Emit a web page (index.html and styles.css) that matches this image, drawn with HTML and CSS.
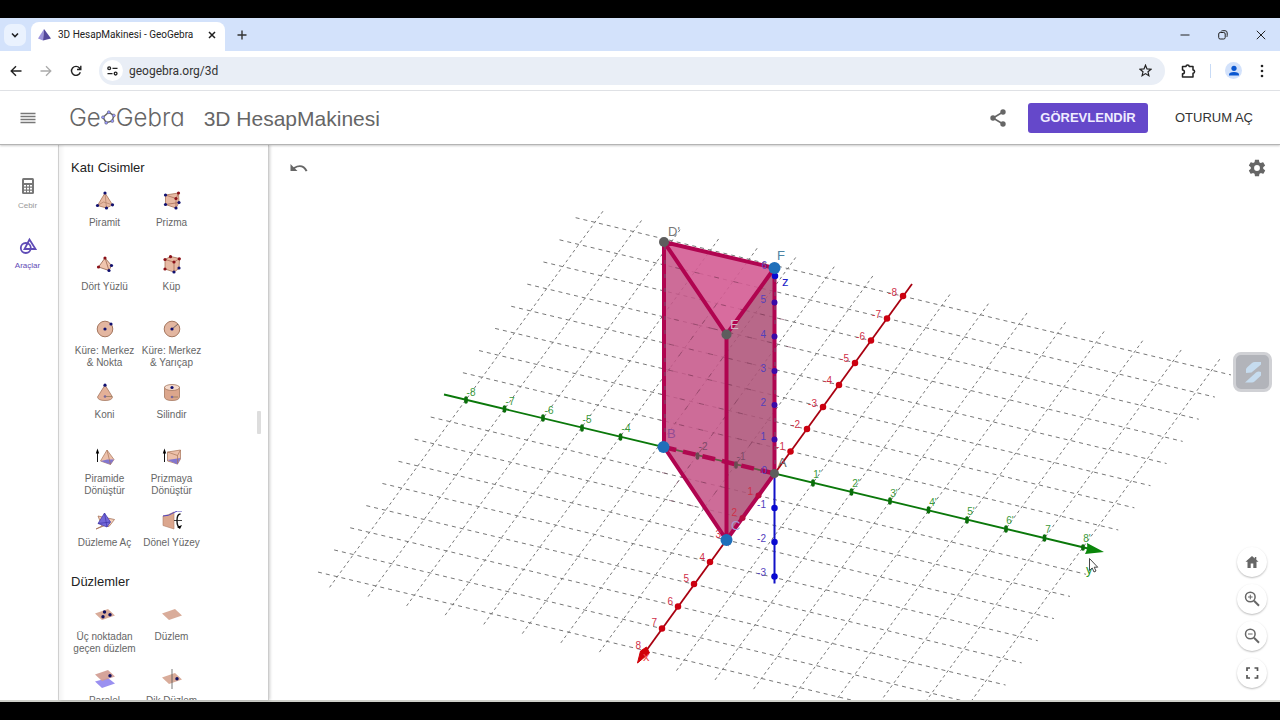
FILE: index.html
```html
<!DOCTYPE html>
<html lang="tr">
<head>
<meta charset="utf-8">
<title>3D HesapMakinesi - GeoGebra</title>
<link rel="stylesheet" href="styles.css">
</head>
<body>
<div class="window">
  <div class="tabstrip">
    <button class="tab-search" aria-label="Sekme ara"><svg width="10" height="10" viewBox="0 0 10 10"><path d="M2 3.5l3 3 3-3" fill="none" stroke="#202124" stroke-width="1.6"/></svg></button>
    <div class="tab">
      <svg width="13" height="12" viewBox="0 0 13 12"><path d="M6 0L0 9.500l5 2z" fill="#9d94dc"/><path d="M6 0L5 11.500l8-2z" fill="#55489c"/></svg>
      <span class="tab-title">3D HesapMakinesi - GeoGebra</span>
      <button class="plain" aria-label="Sekmeyi kapat"><svg width="8" height="8" viewBox="0 0 8 8"><path d="M1 1l6 6M7 1L1 7" stroke="#1f1f1f" stroke-width="1.5"/></svg></button>
    </div>
    <button class="plain new-tab" aria-label="Yeni sekme"><svg width="10" height="10" viewBox="0 0 10 10"><path d="M5 .5v9M.5 5h9" stroke="#333" stroke-width="1.4"/></svg></button>
    <div class="window-controls">
      <button class="plain" aria-label="Küçült"><svg width="10" height="10" viewBox="0 0 10 10"><path d="M.5 5h9" stroke="#222"/></svg></button>
      <button class="plain" aria-label="Önceki boyut"><svg width="10" height="10" viewBox="0 0 10 10"><rect x=".7" y="2.500" width="6.500" height="6.500" rx="1.500" fill="none" stroke="#222"/><path d="M3 1.500Q3.300.7 4.500.7H7Q9.200.7 9.200 3V5.500Q9.200 6.700 8.500 7" fill="none" stroke="#222"/></svg></button>
      <button class="plain" aria-label="Kapat"><svg width="10" height="10" viewBox="0 0 10 10"><path d="M.8.8l8.400 8.400M9.200.8L.8 9.200" stroke="#222"/></svg></button>
    </div>
  </div>

  <div class="toolbar">
    <button class="plain" aria-label="Geri"><svg width="12" height="12" viewBox="0 0 12 12"><path d="M11.500 6H1.500M6 1.200L1.200 6 6 10.800" fill="none" stroke="#222" stroke-width="1.4"/></svg></button>
    <button class="plain" aria-label="İleri"><svg width="12" height="12" viewBox="0 0 12 12"><path d="M.5 6h10M6 1.200L10.800 6 6 10.800" fill="none" stroke="#aaa" stroke-width="1.3"/></svg></button>
    <button class="plain" aria-label="Yenile"><svg width="12" height="12" viewBox="0 0 12 12"><path d="M10.300 7.200A4.500 4.500 0 1 1 9.500 3L10.600 4.200M10.800.7V4.500H7" fill="none" stroke="#222" stroke-width="1.4"/></svg></button>
    <div class="address">
      <button class="site-info" aria-label="Site bilgileri"><svg width="11" height="10" viewBox="0 0 11 10"><g fill="none" stroke="#222" stroke-width="1.3"><circle cx="2.200" cy="2.300" r="1.400"/><circle cx="8.600" cy="7.600" r="1.400"/><path d="M5.500 2.300H10.500M.5 7.600H5.500"/></g></svg></button>
      <input class="url" type="text" value="geogebra.org/3d" aria-label="Adres çubuğu">
      <button class="plain" aria-label="Yer işareti"><svg width="13" height="13" viewBox="0 0 13 13"><path d="M6.500 1.200L8 4.900l4 .3-3 2.600.9 3.900-3.400-2.100-3.400 2.100L4 7.800 1 5.200l4-.3z" fill="none" stroke="#222" stroke-width="1.200"/></svg></button>
    </div>
    <button class="plain ext" aria-label="Uzantılar"><svg width="15" height="14" viewBox="0 0 15 14"><path d="M1.500 2.500H5A1.600 1.600 0 0 1 8.200 2.500H12V6A1.600 1.600 0 0 1 12 9.200V13H1.500V9.800A1.900 1.900 0 0 0 1.500 6z" fill="none" stroke="#222" stroke-width="1.500" stroke-linejoin="round"/></svg></button>
    <span class="divider"></span>
    <button class="profile" aria-label="Profil"><svg width="12" height="12" viewBox="0 0 12 12" fill="#0b57d0"><circle cx="6" cy="3.300" r="2.600"/><path d="M1 10.500V9.500Q1 7 6 7t5 2.500v1z"/></svg></button>
    <button class="plain" aria-label="Menü"><svg width="4" height="14" viewBox="0 0 4 14" fill="#222"><circle cx="2" cy="2" r="1.300"/><circle cx="2" cy="7" r="1.300"/><circle cx="2" cy="12" r="1.300"/></svg></button>
  </div>

  <header class="app-header">
    <button class="plain menu" aria-label="Menü"><svg width="16" height="12" viewBox="0 0 16 12"><path d="M.5 1.500h15M.5 4.500h15M.5 7.500h15M.5 10.500h15" stroke="#777" stroke-width="1.400"/></svg></button>
    <a class="logo" href="#" aria-label="GeoGebra"><span>Ge</span><svg width="15" height="15" viewBox="0 0 15 15"><path d="M7.800 2.200L12.800 5.500 11.300 11 5.200 12.700 2 7.300z" fill="none" stroke="#666" stroke-width="1.500"/><g fill="#9999ff" stroke="#555" stroke-width=".5"><circle cx="7.800" cy="2.200" r="1.500"/><circle cx="12.800" cy="5.500" r="1.500"/><circle cx="11.300" cy="11" r="1.500"/><circle cx="5.200" cy="12.700" r="1.500"/><circle cx="2" cy="7.300" r="1.500"/></g></svg><span>Gebra</span></a>
    <h1 class="app-title">3D HesapMakinesi</h1>
    <button class="plain share" aria-label="Paylaş"><svg width="16" height="18" viewBox="0 0 16 18"><path d="M13 3L3 9l10 6" fill="none" stroke="#666" stroke-width="1.600"/><g fill="#666"><circle cx="13" cy="3" r="2.700"/><circle cx="3" cy="9" r="2.700"/><circle cx="13" cy="15" r="2.700"/></g></svg></button>
    <button class="assign">GÖREVLENDİR</button>
    <button class="signin">OTURUM AÇ</button>
  </header>

  <main class="workspace">
    <nav class="rail">
      <button class="rail-item"><svg width="14" height="18" viewBox="0 0 14 18"><rect x="1" y="1" width="12" height="16" rx="1.500" fill="#777"/><path d="M3 3h8v3H3z" fill="#fff"/><path d="M3 8.700h8M3 11.600h8M3 14.500h8" stroke="#fff" stroke-width="1.600" stroke-dasharray="2 1"/></svg><span>Cebir</span></button>
      <button class="rail-item active"><svg width="18" height="18" viewBox="0 0 18 18"><g fill="none" stroke="#5f4bb6" stroke-width="1.800"><circle cx="6.800" cy="11" r="5"/><path d="M10.500 2.500L5.500 12h11z"/></g></svg><span>Araçlar</span></button>
    </nav>

    <section class="tools">
      <h2>Katı Cisimler</h2>
      <div class="tool-grid">
        <button class="tool"><svg viewBox="0 0 20 20"><path d="M10 2L2.500 14.500 11.500 17 17.500 13.800z" fill="#e7b9a3" stroke="#a87458" stroke-width=".8"/><path d="M10 2l1.500 15M2.500 14.500l6-3.500 9 2.800" fill="none" stroke="#b08068" stroke-width=".7"/><g fill="#101070"><circle cx="10" cy="2" r="1.600"/><circle cx="2.500" cy="14.500" r="1.600"/><circle cx="11.500" cy="17" r="1.600"/><circle cx="17.500" cy="13.800" r="1.600"/></g></svg><span>Piramit</span></button>
        <button class="tool"><svg viewBox="0 0 20 20"><path d="M3.500 4L16.500 2 17 11.500 14 17 3.500 13.500z" fill="#e7b9a3" stroke="#a87458" stroke-width=".8"/><path d="M3.500 4L14 7.500 16.500 2M14 7.500V17M3.500 13.500l13.500-2" fill="none" stroke="#a06450" stroke-width=".7"/><g fill="#101070"><circle cx="3.500" cy="4" r="1.600"/><circle cx="3.500" cy="13.500" r="1.600"/><circle cx="17" cy="11.500" r="1.600"/><circle cx="14" cy="17" r="1.600"/></g><g fill="#8b1018"><circle cx="16.500" cy="2" r="1.600"/><circle cx="14" cy="7.500" r="1.600"/></g></svg><span>Prizma</span></button>
        <button class="tool"><svg viewBox="0 0 20 20"><path d="M10 3L3.500 12 14 15.500 16.500 10.500z" fill="#f0c5ae" stroke="#8f5d48" stroke-width=".8"/><path d="M10 3l4 12.500" stroke="#8f5d48" stroke-width=".7"/><g fill="#8b1018"><circle cx="10" cy="3" r="1.600"/><circle cx="3.500" cy="12" r="1.600"/></g><g fill="#101070"><circle cx="14" cy="15.500" r="1.600"/><circle cx="16.500" cy="10.500" r="1.600"/></g></svg><span>Dört Yüzlü</span></button>
        <button class="tool"><svg viewBox="0 0 20 20"><path d="M3 4.500L8.500 1.500 17.500 3.500 17 13.500 12 17 3 14z" fill="#e7b9a3" stroke="#a87458" stroke-width=".8"/><path d="M3 4.500L12 7l5.500-3.500M12 7v10" fill="none" stroke="#a06450" stroke-width=".7"/><g fill="#8b1018"><circle cx="3" cy="4.500" r="1.600"/><circle cx="8.500" cy="1.700" r="1.600"/><circle cx="17.300" cy="3.800" r="1.600"/><circle cx="12" cy="7" r="1.600"/><circle cx="3" cy="14" r="1.600"/></g><g fill="#101070"><circle cx="17" cy="13" r="1.600"/><circle cx="12" cy="17" r="1.600"/></g></svg><span>Küp</span></button>
        <button class="tool"><svg viewBox="0 0 20 20"><circle cx="10" cy="10" r="7.800" fill="#e3b6a0" stroke="#a5775f"/><circle cx="10" cy="10" r="1.600" fill="#101070"/><circle cx="16" cy="5" r="1.600" fill="#101070"/></svg><span>Küre: Merkez &amp; Nokta</span></button>
        <button class="tool"><svg viewBox="0 0 20 20"><circle cx="10" cy="10" r="7.800" fill="#e3b6a0" stroke="#a5775f"/><path d="M10 10l6-5" stroke="#555" stroke-width=".8"/><circle cx="10" cy="10" r="1.600" fill="#101070"/></svg><span>Küre: Merkez &amp; Yarıçap</span></button>
        <button class="tool"><svg viewBox="0 0 20 20"><path d="M10 2L2.500 14Q3 17.500 10 17.500T17.500 14z" fill="#e3b097" stroke="#a5775f" stroke-width=".8"/><path d="M10 13.500h7" stroke="#875" stroke-width=".7"/><circle cx="10" cy="2.200" r="1.600" fill="#101070"/><circle cx="10" cy="13.500" r="1.300" fill="#77679c"/></svg><span>Koni</span></button>
        <button class="tool"><svg viewBox="0 0 20 20"><path d="M2.500 4V14Q3 17.500 10 17.500T17.500 14V4z" fill="#dca68c" stroke="#a5775f" stroke-width=".8"/><ellipse cx="10" cy="4.500" rx="7.500" ry="3" fill="#f4d9cb" stroke="#a5775f" stroke-width=".8"/><path d="M10 14h6" stroke="#875" stroke-width=".7"/><circle cx="10" cy="4.500" r="1.600" fill="#101070"/><circle cx="10" cy="14" r="1.300" fill="#77679c"/></svg><span>Silindir</span></button>
        <button class="tool"><svg viewBox="0 0 20 20"><path d="M2.500 15V4" stroke="#111"/><path d="M2.500 1.500L.8 6.500h3.400z"/><path d="M12 3L5.500 14 15.500 17.500 19 12.500z" fill="#ecc0aa" stroke="#a87458" stroke-width=".7"/><path d="M5.500 14l7-1.500 6.500 0-3.500 5z" fill="#8276cf"/><path d="M12 3l3.500 14.500" stroke="#a87458" stroke-width=".7"/></svg><span>Piramide Dönüştür</span></button>
        <button class="tool"><svg viewBox="0 0 20 20"><path d="M2.500 15V4" stroke="#111"/><path d="M2.500 1.500L.8 6.500h3.400z"/><path d="M5.500 5L18.500 3V12L15.500 17 5.500 14z" fill="#ecc0aa" stroke="#a87458" stroke-width=".7"/><path d="M5.500 13l13-2-3 6.500z" fill="#8276cf"/><path d="M5.500 5l10 3.500 3-5.500M15.500 8.500V17" fill="none" stroke="#a87458" stroke-width=".7"/></svg><span>Prizmaya Dönüştür</span></button>
        <button class="tool"><svg viewBox="0 0 20 20"><path d="M3 5l4 10-6 3 9-3.500 4 1 5.500-7z" fill="#f3d0bc" stroke="#9d654a" stroke-width=".7"/><path d="M9.500 2L3 12.500 12 16 15.500 11z" fill="#7367d8" stroke="#3f35a8" stroke-width=".7"/><path d="M9.500 2L12 16M3 12.500l12.500-1.500" stroke="#3f35a8" stroke-width=".7"/></svg><span>Düzleme Aç</span></button>
        <button class="tool"><svg viewBox="0 0 20 20"><path d="M1 5Q7 4 12 1V18L1 14.500z" fill="#dba68e" stroke="#b07c64" stroke-width=".6"/><path d="M1 5Q7 5 11 2T20 0" fill="none" stroke="#5146c0"/><path d="M12 9.500h8" stroke="#111" stroke-width=".8"/><path d="M18.500 3Q15 3 15 9.500T18 16.500" fill="none" stroke="#111" stroke-width="1.400"/><path d="M15 16l5-2-2 4z"/></svg><span>Dönel Yüzey</span></button>
      </div>
      <h2>Düzlemler</h2>
      <div class="tool-grid">
        <button class="tool"><svg viewBox="0 0 20 20"><path d="M0 8.500L13 4 20 10.500 7 15z" fill="#d9ac9a"/><g fill="#101060"><circle cx="9.500" cy="7" r="1.700"/><circle cx="15" cy="9.700" r="1.700"/><circle cx="8" cy="11.700" r="1.700"/></g></svg><span>Üç noktadan geçen düzlem</span></button>
        <button class="tool"><svg viewBox="0 0 20 20"><path d="M0 8.500L13 4 20 10.500 7 15z" fill="#d9ac9a"/></svg><span>Düzlem</span></button>
        <button class="tool"><svg viewBox="0 0 20 20"><path d="M0 12.500L13 9 20 14.500 7 19z" fill="#9a90f0"/><path d="M0 5.500L13 1 20 7.500 7 12z" fill="#d09a90" opacity=".9"/><circle cx="15" cy="6.700" r="1.700" fill="#101060"/></svg><span>Paralel Düzlem</span></button>
        <button class="tool"><svg viewBox="0 0 20 20"><path d="M0 8.500L13 4 20 10.500 7 15z" fill="#d9ac9a"/><path d="M10 0v20" stroke="#555" stroke-width=".8"/><circle cx="15" cy="9.700" r="1.700" fill="#101060"/></svg><span>Dik Düzlem</span></button>
      </div>
      <span class="scroll-thumb"></span>
    </section>

    <section class="view3d">
      <svg class="scene" viewBox="269 145 1011 555" preserveAspectRatio="xMidYMid slice" role="img" aria-label="3D grafik">
        <g transform="matrix(38.55 9.25 -16.1 22.15 774.5 473.5)" fill="none" stroke="#777">
          <path class="grid-y" d="M-8.500-8h17M-8.500-7h17M-8.500-6h17M-8.500-5h17M-8.500-4h17M-8.500-3h17M-8.500-2h17M-8.500-1h17M-8.500 1h17M-8.500 2h17M-8.500 3h17M-8.500 4h17M-8.500 5h17M-8.500 6h17M-8.500 7h17M-8.500 8h17"/>
          <path class="grid-x" d="M-8-8.500v17M-7-8.500v17M-6-8.500v17M-5-8.500v17M-4-8.500v17M-3-8.500v17M-2-8.500v17M-1-8.500v17M1-8.500v17M2-8.500v17M3-8.500v17M4-8.500v17M5-8.500v17M6-8.500v17M7-8.500v17M8-8.500v17"/>
        </g>

        <!-- Axes -->
        <path d="M444 394.500L1088 548.500" stroke="#0a780a" stroke-width="1.800"/>
        <path d="M1087 543l17 9-19 2q3-5 2-11z" fill="#0a860a"/>
        <path d="M912 284L646 651" stroke="#a80010" stroke-width="1.800"/>
        <path d="M637.500 663l3-12 6-4 3 6z" fill="#d00008" stroke="#d00008" stroke-linejoin="round"/>
        <path d="M774.500 268v315.500" stroke="#1212c8" stroke-width="2"/>

        <!-- Prism faces -->
        <path d="M664 242L726.500 334.500V540L663.500 447z" fill="#c6588a" opacity=".88"/>
        <path d="M726.500 334.500L774.500 268V473.500L726.500 540z" fill="#ae5379" opacity=".88"/>
        <path d="M664 242L774.500 268 726.500 334.500z" fill="#d45c93" opacity=".9"/>
        <g transform="matrix(38.55 9.25 -16.1 22.15 774.5 473.5)" fill="none" stroke="#723450" opacity=".55">
          <path class="grid-inner" d="M-4.700-5h1.300M-5.500-7h2M-4.400-6h2.300M-3.800-5h2.200M-4.400-4h2.500M-4-3h2.500M-3.800-2h2.500M-3.400-1h2.600M-2.500 1h2M-1.900 2h1M-4-6v3M-3-4v3M-2-2.500v4M-1-1v2.500"/>
        </g>

        <!-- Prism edges -->
        <path d="M663.500 447L774.500 473.500" stroke="#5d6244" stroke-width="1.600"/>
        <path d="M663.500 447L774.500 473.500" stroke="#b00850" stroke-width="4.500" stroke-dasharray="13 7"/>
        <g fill="none" stroke="#b00450" stroke-width="4" stroke-linecap="round">
          <path d="M664 242L774.500 268 726.500 334.500zV447L726.500 540V334.500M774.500 268V473.500L726.500 540"/>
        </g>
        <path d="M665 246V447M775 278V473" stroke="#74536e" stroke-width="1" stroke-dasharray="4 10"/>

        <!-- Axis ticks -->
        <path d="M466 398v4M504.500 407v4M543 416v4M582 426v4M620.500 435v4M813 481v4M851.500 490v4M890 499v4M928.500 508v4M967 518v4M1006 527v4M1044.500 536v4M1083 546v3" stroke="#0a6e0a" stroke-width="3.600" stroke-linecap="round"/>
        <path d="M697.500 454v4M736 463v4" stroke="#694b52" stroke-width="3.600" stroke-linecap="round"/>
        <path d="M903 296h0M887 318.500h0M871 340.500h0M855 363h0M839 385h0M823 407h0M807 429h0M790.500 451.500h0M710 562h0M694 584h0M678 606.500h0M662 628.500h0" stroke="#cc0010" stroke-width="6.500" stroke-linecap="round"/>
        <path d="M758.500 495.500h0M742.500 518h0" stroke="#b80a40" stroke-width="6" stroke-linecap="round"/>
        <path d="M774.500 508h0M774.500 542h0M774.500 576.500h0M775 276h0" stroke="#0a0ad0" stroke-width="6.500" stroke-linecap="round"/>
        <path d="M774.500 439.500h0M774.500 405h0M774.500 371h0M774.500 336.500h0M774.500 302.500h0" stroke="#3a0aa8" stroke-width="6" stroke-linecap="round"/>

        <!-- Vertices -->
        <g fill="#5d5d5d"><circle cx="664" cy="242" r="5"/><circle cx="726.500" cy="334.500" r="5"/><circle cx="774.500" cy="473.500" r="4.500"/></g>
        <g fill="#1f6fba"><circle cx="774.500" cy="268" r="6"/><circle cx="663.500" cy="447" r="6"/><circle cx="726.500" cy="540" r="6"/></g>

        <!-- Axis numbers -->
        <g class="tick" fill="#3a9a3a" text-anchor="middle">
          <text x="471" y="396">-8</text><text x="510" y="405">-7</text><text x="549" y="414">-6</text><text x="587" y="423">-5</text><text x="626" y="432">-4</text>
          <text x="703" y="450" fill="#7c4a66">-2</text><text x="741" y="460" fill="#7c4a66">-1</text>
          <text x="817" y="478">1'</text><text x="856" y="487">2'</text><text x="894" y="497">3'</text><text x="933" y="506">4'</text><text x="971" y="515">5'</text><text x="1010" y="524">6'</text><text x="1048" y="533">7</text><text x="1087" y="542">8'</text>
        </g>
        <g class="tick" fill="#cf3048" text-anchor="end">
          <text x="897" y="296">-8</text><text x="881" y="318">-7</text><text x="865" y="340">-6</text><text x="849" y="362">-5</text><text x="832" y="384">-4</text><text x="817" y="407">-3</text><text x="800" y="428">-2</text><text x="785" y="450">-1</text>
          <text x="753" y="495">1</text><text x="737" y="516">2</text><text x="721" y="538">3</text><text x="705" y="561">4</text><text x="689" y="582">5</text><text x="673" y="605">6</text><text x="657" y="626">7</text><text x="641" y="649">8</text>
        </g>
        <g class="tick" fill="#5340bd" text-anchor="end">
          <text x="767" y="269">6</text><text x="766" y="303">5</text><text x="766" y="338">4</text><text x="766" y="372">3</text><text x="766" y="406">2</text><text x="766" y="440">1</text><text x="767" y="474">0</text><text x="766" y="508">-1</text><text x="766" y="542">-2</text><text x="766" y="576">-3</text>
        </g>

        <!-- Names -->
        <g class="point-name">
          <text x="668" y="236" fill="#777">D'</text><text x="777" y="260" fill="#4c84a4">F</text><text x="730" y="329" fill="#d6b3c6">E</text>
          <text x="667" y="438" fill="#944b94">B</text><text x="778" y="467" fill="#666">A</text><text x="731" y="530" fill="#a99ad0">C</text>
          <text x="782" y="286" fill="#2222c8">z</text><text x="643" y="661" fill="#f04848">x</text><text x="1086" y="574" fill="#2a9a2a">y</text>
        </g>
        <path d="M1089.500 558.500v12l2.700-2.500 1.800 4 2-1-1.800-3.800h3.500z" fill="#fff" stroke="#333" stroke-width=".9"/>
      </svg>

      <button class="plain undo" aria-label="Geri al"><svg width="18" height="10" viewBox="0 0 18 10"><path d="M.5 1v7h7L5 5.500Q12 1.500 15.700 8.500L17.500 7.800Q13-.8 3.600 4.200z" fill="#666"/></svg></button>
      <button class="plain settings" aria-label="Ayarlar"><svg width="20" height="20" viewBox="0 0 24 24"><path fill="#666" d="M19.400 13c0-.3.100-.6.100-1s0-.7-.1-1l2.100-1.600c.2-.2.200-.4.100-.6l-2-3.500c-.1-.2-.4-.3-.6-.2l-2.500 1c-.5-.4-1.100-.7-1.700-1l-.4-2.600c0-.3-.2-.5-.4-.5h-4c-.3 0-.5.2-.5.400l-.4 2.700c-.6.200-1.100.600-1.700 1L4.900 5.100c-.2-.1-.5 0-.6.2l-2 3.500c-.1.200 0 .5.200.600L4.600 11c0 .3-.1.700-.1 1s0 .7.100 1l-2.100 1.700c-.2.100-.3.400-.2.600l2 3.500c.1.200.4.300.6.200l2.500-1c.5.400 1.100.7 1.700 1l.4 2.600c0 .3.200.4.500.4h4c.3 0 .5-.2.500-.4l.4-2.600c.6-.3 1.200-.6 1.700-1l2.500 1c.2.100.5 0 .6-.2l2-3.500c.1-.2.100-.5-.1-.6zM12 15.500a3.500 3.500 0 1 1 0-7 3.500 3.500 0 0 1 0 7z"/></svg></button>
      <button class="overlay" aria-label="Kaydedici"><svg width="20" height="24" viewBox="0 0 20 24"><path d="M3 13V9.500Q3 8 4.500 7L9 3Q10 2 12 2h6v2.500L8.500 12.500zM2 22.500l11-10q2.500-1.800 5-.5v3.500l-6.500 6Q10.500 22.500 9 22.500z" fill="#c6dcef"/></svg></button>
      <div class="zoom-buttons">
        <button aria-label="Standart görünüm"><svg viewBox="0 0 16 16"><path d="M8 2L1.500 7.800h2V14H6.700V9.500H9.300V14h3.200V7.800h2L12.300 5.800V3h-1.500v1.500z" fill="#666"/></svg></button>
        <button aria-label="Yakınlaştır"><svg viewBox="0 0 16 16"><g fill="none" stroke="#666"><circle cx="6.300" cy="6" r="4.800" stroke-width="1.500"/><path d="M10 9.700l5 5" stroke-width="2"/><path d="M4 6h4.600M6.300 3.700v4.600"/></g></svg></button>
        <button aria-label="Uzaklaştır"><svg viewBox="0 0 16 16"><g fill="none" stroke="#666"><circle cx="6.300" cy="6" r="4.800" stroke-width="1.500"/><path d="M10 9.700l5 5" stroke-width="2"/><path d="M4 6h4.600"/></g></svg></button>
        <button aria-label="Tam ekran"><svg viewBox="0 0 16 16"><path d="M6 3H3v3M10.500 3h3v3M3 10v3h3M13.500 10v3h-3" fill="none" stroke="#555" stroke-width="1.700"/></svg></button>
      </div>
    </section>
  </main>
</div>
</body>
</html>
```
FILE: styles.css
```css
* { box-sizing: border-box; }

body {
  margin: 0;
  height: 100vh;
  padding: 18px 0;
  background: #000;
  font-family: "Liberation Sans", Arial, sans-serif;
}

button {
  display: flex;
  align-items: center;
  justify-content: center;
  margin: 0;
  padding: 0;
  border: 0;
  background: none;
  font-family: inherit;
  cursor: pointer;
}

svg { display: block; flex: none; }

.window {
  display: flex;
  flex-direction: column;
  height: 100%;
  background: #fff;
  border-bottom: 2px solid #cfd0ca;
}

.tabstrip {
  display: flex;
  align-items: center;
  flex: none;
  height: 33px;
  padding-left: 4px;
  background: #d3e2fb;
}

.tab-search {
  width: 22px;
  height: 22px;
  margin-right: 5px;
  border-radius: 7px;
  background: #eaf2fe;
}

.tab {
  display: flex;
  align-items: center;
  align-self: flex-end;
  width: 194px;
  height: 29px;
  padding: 0 9px 4px 7px;
  border-radius: 8px 8px 0 0;
  background: #fff;
}

.tab-title {
  flex: 1;
  margin-left: 7px;
  font: 10px/16px Roboto, sans-serif;
  color: #222;
  white-space: nowrap;
}

.new-tab { margin-left: 12px; }

.window-controls {
  display: flex;
  gap: 28px;
  margin-left: auto;
  padding-right: 14px;
}

.toolbar {
  display: flex;
  align-items: center;
  flex: none;
  gap: 18px;
  height: 40px;
  padding: 0 16px 0 10px;
  border-bottom: 1px solid #e2e4e8;
}

.address {
  display: flex;
  flex: 1;
  align-items: center;
  height: 28px;
  margin-left: -1px;
  padding: 0 13px 0 3px;
  border-radius: 14px;
  background: #e9eef6;
}

.site-info {
  width: 21px;
  height: 21px;
  border-radius: 50%;
  background: #fff;
}

.url {
  flex: 1;
  min-width: 0;
  margin-left: 6px;
  padding: 0;
  border: 0;
  background: none;
  font: 12px/20px Roboto, sans-serif;
  color: #333;
}

.ext { margin-left: -2px; }

.divider {
  width: 1px;
  height: 14px;
  margin: 0 -4px;
  background: #c8dbf6;
}

.profile {
  width: 17px;
  height: 17px;
  border-radius: 50%;
  background: #d3e2fb;
}

.app-header {
  display: flex;
  align-items: center;
  flex: none;
  z-index: 2;
  height: 54px;
  padding: 0 27px 0 20px;
  background: #fff;
  border-bottom: 1px solid #b4b4b4;
  box-shadow: 0 1px 2px #0003;
}

.logo {
  display: flex;
  align-items: center;
  margin-left: 33px;
  color: #666;
  font: 300 24px/30px Inter, sans-serif;
  font-feature-settings: "cv11";
  text-decoration: none;
}

.app-title {
  margin: 3px 0 0 19px;
  color: #666;
  font-size: 21px;
  font-weight: 400;
  line-height: 28px;
  white-space: nowrap;
}

.share { margin-left: auto; }

.assign {
  width: 120px;
  height: 30px;
  margin: 0 27px 0 22px;
  border-radius: 3px;
  background: #6548ca;
  color: #f0ecff;
  font-size: 13px;
  font-weight: 700;
}

.signin {
  color: #333;
  font-size: 13px;
}

.workspace {
  display: flex;
  flex: 1;
  min-height: 0;
}

.rail {
  display: flex;
  flex-direction: column;
  gap: 24px;
  width: 59px;
  padding: 32px 3px 0 0;
  border-right: 1px solid #d6d6d6;
}

.rail-item {
  flex-direction: column;
  gap: 5px;
  color: #999;
  font-size: 8px;
  line-height: 12px;
  padding-bottom: 1px;
}

.rail-item.active { color: #5f4bb6; }

.tools {
  position: relative;
  z-index: 1;
  width: 210px;
  padding: 15px 12px 0;
  overflow: hidden;
  border-right: 1px solid #ccc;
  box-shadow: 1px 0 3px #0003;
  background: linear-gradient(90deg, #f3f3f3, #fff 6px);
}

.tools h2 {
  margin: 0 0 15px;
  color: #222;
  font-size: 13px;
  font-weight: 400;
  line-height: 16px;
}

.tool-grid {
  display: grid;
  grid-template-columns: 67px 67px;
  grid-auto-rows: 64px;
  margin-bottom: -1px;
}

.tool {
  flex-direction: column;
  justify-content: flex-start;
  gap: 6px;
  color: #666;
  font-size: 10px;
  line-height: 12px;
}

.tool svg { width: 20px; height: 20px; }

.scroll-thumb {
  position: absolute;
  top: 266px;
  right: 7px;
  width: 4px;
  height: 23px;
  border-radius: 1px;
  background: #ddd;
}

.view3d {
  position: relative;
  flex: 1;
  min-width: 0;
  overflow: hidden;
}

.scene {
  width: 100%;
  height: 100%;
}

.grid-y, .grid-x, .grid-inner {
  vector-effect: non-scaling-stroke;
  stroke-width: 1px;
}

.grid-y { stroke-dasharray: 4 4; }
.grid-x { stroke-dasharray: 3 3; }
.grid-inner { stroke-dasharray: 5 15; }

.tick { font-size: 10px; }
.point-name { font-size: 13px; }

.undo {
  position: absolute;
  top: 18px;
  left: 21px;
}

.settings {
  position: absolute;
  top: 13px;
  right: 13px;
}

.overlay {
  position: absolute;
  top: 207px;
  right: 8px;
  width: 39px;
  height: 40px;
  border: 3px solid #d0d1d5;
  border-radius: 8px;
  background: #b2b4ba;
}

.zoom-buttons {
  position: absolute;
  right: 13px;
  bottom: 12px;
  display: flex;
  flex-direction: column;
  gap: 7px;
}

.zoom-buttons button {
  width: 30px;
  height: 30px;
  border-radius: 50%;
  background: #fff;
  box-shadow: 0 1px 2px #0004;
}

.zoom-buttons svg { width: 16px; height: 16px; }
```
